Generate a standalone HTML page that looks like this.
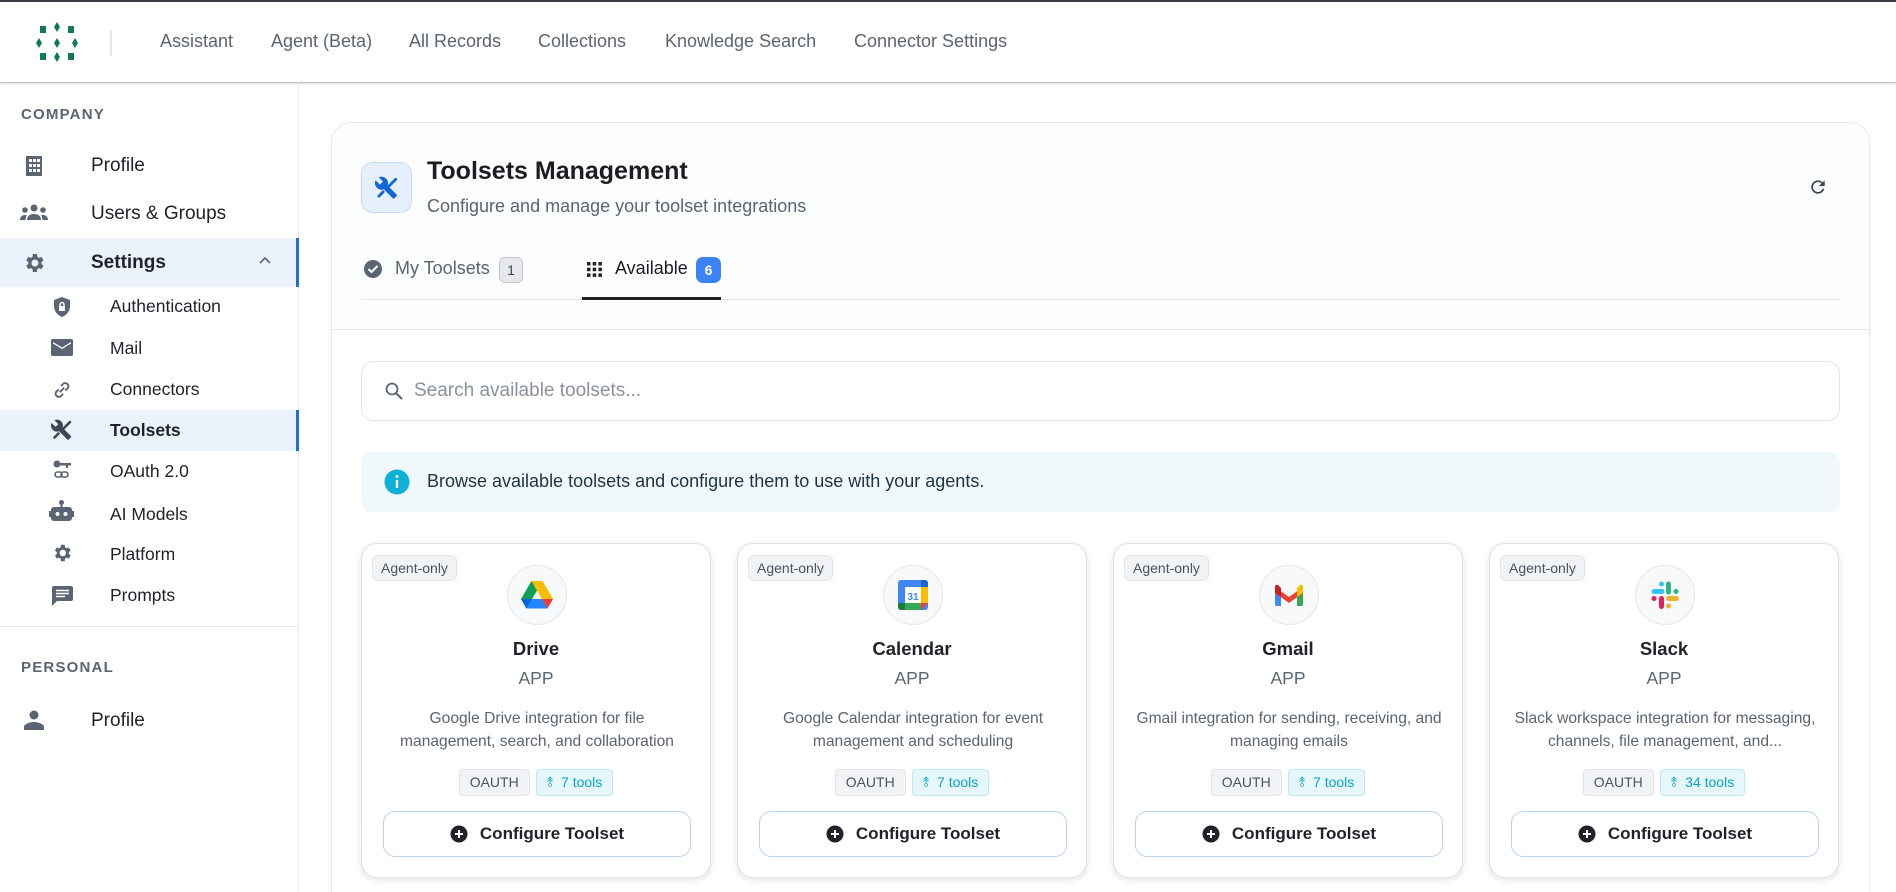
<!DOCTYPE html>
<html style="width:1896px;height:892px;overflow:hidden"><head><meta charset="utf-8"><style>
*{box-sizing:border-box;margin:0;padding:0}
body{width:1896px;height:892px;overflow:hidden;background:#fff;font-family:"Liberation Sans",Arial,sans-serif;color:#1f2328;position:relative}
.abs{position:absolute}
.top{left:0;top:0;width:1896px;height:82px;border-top:2px solid #3a3a44;background:#fff;box-shadow:0 1px 2px rgba(0,0,0,.35)}
.nav{top:29px;font-size:18px;color:#5b6472}
.side{left:0;top:82px;width:299px;height:810px;border-right:1px solid #e6e8eb}
.lbl{font-size:15px;letter-spacing:1.2px;color:#5b6472;font-weight:bold}
.it{font-size:19px;color:#1f2328}
.sub{font-size:17.5px;color:#1f2328}
.ic{fill:#5b6472}
.main{left:331px;top:122px;width:1539px;height:790px;border:1px solid #e6e8eb;border-radius:20px;background:#fff;overflow:hidden}
.card{width:350px;height:335px;top:543px;border:1px solid #dfe2e6;border-radius:16px;background:#fff;box-shadow:0 2px 8px rgba(0,0,0,.12)}
.card .badge{position:absolute;left:10px;top:11px;height:26px;padding:0 8px;line-height:24px;border:1px solid #e1e4e8;background:#f1f3f5;border-radius:6px;font-size:14px;color:#4b5563}
.card .logo{position:absolute;left:145px;top:21px;width:60px;height:60px;border-radius:50%;border:1px solid #e3e6ea;background:#f8f9fb;display:flex;align-items:center;justify-content:center}
.card .nm{position:absolute;left:0;width:100%;top:94px;text-align:center;font-weight:bold;font-size:18.5px}
.card .ty{position:absolute;left:0;width:100%;top:124px;text-align:center;font-size:17.5px;color:#5b6472}
.card .ds{position:absolute;left:20px;width:310px;top:163px;text-align:center;font-size:15.6px;line-height:23px;color:#5b6472}
.card .chips{position:absolute;left:0;width:100%;top:225px;display:flex;justify-content:center;gap:6px}
.chip{height:27px;line-height:25px;padding:0 10px;border-radius:4px;font-size:14px}
.c1{background:#f1f3f5;border:1px solid #e1e4e8;color:#4b5563}
.c2{background:#e6f7fb;border:1px solid #bfe8f3;color:#0aa5c7}
.card .btn{position:absolute;left:21px;top:267px;width:308px;height:46px;border:1px solid #b9d3f3;border-radius:12px;display:flex;align-items:center;justify-content:center;gap:12px;font-weight:bold;font-size:17px}
</style></head><body>
<div class="abs top">
<svg class="abs" style="left:34px;top:18px" width="48" height="46" viewBox="0 0 48 46"><g fill="#127a52"><rect x="6" y="6" width="6" height="7"/><rect x="34" y="6" width="6" height="7"/><rect x="6" y="33" width="6" height="7"/><rect x="34" y="33" width="6" height="7"/><path d="M23 2l3 5-3 5-3-5z"/><path d="M23 32l3 5-3 5-3-5z"/><path d="M5 18l3 5-3 5-3-5z"/><path d="M23 18l3 5-3 5-3-5z"/><path d="M41 18l3 5-3 5-3-5z"/></g></svg>
<div class="abs" style="left:110px;top:28px;width:2px;height:26px;background:#e4e6e9"></div>
<div class="abs nav" style="left:160px">Assistant</div>
<div class="abs nav" style="left:271px">Agent (Beta)</div>
<div class="abs nav" style="left:409px">All Records</div>
<div class="abs nav" style="left:538px">Collections</div>
<div class="abs nav" style="left:665px">Knowledge Search</div>
<div class="abs nav" style="left:854px">Connector Settings</div>
</div>
<div class="abs side">
<div class="abs lbl" style="left:21px;top:24px">COMPANY</div>
<svg class="abs" style="left:25px;top:73px" width="18" height="22"><path class="ic" d="M1 1h16v20H1z M4 4v3h3V4z M8 4v3h3V4z M12 4v3h3V4z M4 9v3h3V9z M8 9v3h3V9z M12 9v3h3V9z M4 14v3h3v-3z M8 14v3h3v-3z M12 14v3h3v-3z" fill-rule="evenodd"/></svg>
<div class="abs it" style="left:91px;top:73px">Profile</div>
<svg class="abs" style="left:20px;top:122px" width="28" height="18"><g class="ic"><circle cx="14" cy="4" r="3.5"/><circle cx="5" cy="6" r="2.8"/><circle cx="23" cy="6" r="2.8"/><path d="M7 16c0-4 3-6 7-6s7 2 7 6z"/><path d="M0 16c0-3 2-5 5-5 1 0 2 .3 2 .5-1 1-1.5 3-1.5 4.5z"/><path d="M28 16c0-3-2-5-5-5-1 0-2 .3-2 .5 1 1 1.5 3 1.5 4.5z"/></g></svg>
<div class="abs it" style="left:91px;top:121px">Users &amp; Groups</div>
<div class="abs" style="left:0;top:156px;width:299px;height:49px;background:#ebf2fb;border-right:3px solid #1e6fd9"></div>
<svg class="abs" style="left:22px;top:169px" width="24" height="24" viewBox="0 0 24 24"><path class="ic" d="M19.4 13a7.5 7.5 0 000-2l2.1-1.6-2-3.5-2.5 1a7 7 0 00-1.7-1L14.9 3h-4l-.4 2.9a7 7 0 00-1.7 1l-2.5-1-2 3.5L6.4 11a7.5 7.5 0 000 2l-2.1 1.6 2 3.5 2.5-1a7 7 0 001.7 1l.4 2.9h4l.4-2.9a7 7 0 001.7-1l2.5 1 2-3.5zM12.9 15.5a3.5 3.5 0 110-7 3.5 3.5 0 010 7z"/></svg>
<div class="abs it" style="left:91px;top:170px;font-weight:bold">Settings</div>
<svg class="abs" style="left:259px;top:174px" width="12" height="8"><path d="M1 7l5-5 5 5" stroke="#5b6472" stroke-width="1.6" fill="none"/></svg>
<svg class="abs" style="left:52px;top:214px" width="20" height="22" viewBox="0 0 20 22"><path class="ic" d="M10 1L2 4v6c0 5 3.5 9.5 8 11 4.5-1.5 8-6 8-11V4z"/><rect x="7" y="10" width="6" height="5" fill="#fff"/><path d="M8 10V8.5a2 2 0 014 0V10" stroke="#fff" stroke-width="1.4" fill="none"/></svg>
<div class="abs sub" style="left:110px;top:214px">Authentication</div>
<svg class="abs" style="left:51px;top:257px" width="22" height="17"><path class="ic" d="M2 0h18a2 2 0 012 2v13a2 2 0 01-2 2H2a2 2 0 01-2-2V2a2 2 0 012-2zm0 3v1.5l9 5.5 9-5.5V3l-9 5.5z"/></svg>
<div class="abs sub" style="left:110px;top:256px">Mail</div>
<svg class="abs" style="left:51px;top:297px" width="22" height="22" viewBox="0 0 20 20"><g stroke="#5b6472" stroke-width="1.7" fill="none"><path d="M8 12l4-4"/><path d="M7 9.5L4.5 12a3 3 0 004 4l2.5-2.5"/><path d="M13 10.5l2.5-2.5a3 3 0 00-4-4L9 6.5"/></g></svg>
<div class="abs sub" style="left:110px;top:297px">Connectors</div>
<div class="abs" style="left:0;top:328px;width:299px;height:41px;background:#ebf2fb;border-right:3px solid #1e6fd9"></div>
<svg class="abs" style="left:51px;top:337px" width="22" height="22" viewBox="0 0 24 24"><path fill="#3d4654" d="M21.7 18.6l-9.1-9.1c.9-2.3.4-5-1.5-6.9-2-2-5-2.4-7.4-1.3L8 5.6 5 8.6.6 4.4C-.6 6.8 0 9.8 1.9 11.8c1.9 1.9 4.6 2.4 6.9 1.5l9.1 9.1c.4.4 1 .4 1.4 0l2.3-2.3c.5-.4.5-1.1.1-1.5z"/><path fill="#3d4654" d="M17 2l5 0 0 2-9 9-2-2 9-9z M2 20l6-6 2 2-6 6z"/></svg>
<div class="abs sub" style="left:110px;top:338px;font-weight:bold">Toolsets</div>
<svg class="abs" style="left:52px;top:377px" width="20" height="22" viewBox="0 0 20 22"><g class="ic"><circle cx="5" cy="5" r="3.5"/><rect x="7" y="4" width="12" height="2.5"/><rect x="14" y="6" width="2" height="3"/></g><g stroke="#5b6472" stroke-width="1.6" fill="none"><rect x="3" y="13" width="7" height="5" rx="2.5"/><rect x="9" y="13" width="7" height="5" rx="2.5"/></g></svg>
<div class="abs sub" style="left:110px;top:379px">OAuth 2.0</div>
<svg class="abs" style="left:49px;top:418px" width="25" height="22" viewBox="0 0 25 22"><g class="ic"><circle cx="12.5" cy="2.5" r="2.5"/><rect x="11.5" y="3" width="2" height="4"/><path d="M5 7h15a3 3 0 013 3v1h2v6h-2v1a3 3 0 01-3 3H5a3 3 0 01-3-3v-1H0v-6h2v-1a3 3 0 013-3z"/></g><circle cx="8.5" cy="14" r="2" fill="#fff"/><circle cx="16.5" cy="14" r="2" fill="#fff"/></svg>
<div class="abs sub" style="left:110px;top:422px">AI Models</div>
<svg class="abs" style="left:51px;top:460px" width="22" height="22" viewBox="0 0 24 24"><path class="ic" d="M19.4 13a7.5 7.5 0 000-2l2.1-1.6-2-3.5-2.5 1a7 7 0 00-1.7-1L14.9 3h-4l-.4 2.9a7 7 0 00-1.7 1l-2.5-1-2 3.5L6.4 11a7.5 7.5 0 000 2l-2.1 1.6 2 3.5 2.5-1a7 7 0 001.7 1l.4 2.9h4l.4-2.9a7 7 0 001.7-1l2.5 1 2-3.5zM12.9 15.5a3.5 3.5 0 110-7 3.5 3.5 0 010 7z"/></svg>
<div class="abs sub" style="left:110px;top:462px">Platform</div>
<svg class="abs" style="left:52px;top:504px" width="21" height="20" viewBox="0 0 21 20"><path class="ic" d="M2 0h17a2 2 0 012 2v11a2 2 0 01-2 2H5l-5 5V2a2 2 0 012-2z"/><g stroke="#fff" stroke-width="1.6"><path d="M4 4.5h13M4 7.5h13M4 10.5h9"/></g></svg>
<div class="abs sub" style="left:110px;top:503px">Prompts</div>
<div class="abs" style="left:0;top:544px;width:299px;height:1px;background:#e6e8eb"></div>
<div class="abs lbl" style="left:21px;top:577px">PERSONAL</div>
<svg class="abs" style="left:24px;top:628px" width="20" height="20"><g class="ic"><circle cx="10" cy="5" r="4.5"/><path d="M0 20v-3c0-3 6-5 10-5s10 2 10 5v3z"/></g></svg>
<div class="abs it" style="left:91px;top:628px">Profile</div>
</div>

<div class="abs main">
<div class="abs" style="left:0;top:0;width:1539px;height:207px;background:#fcfdfd;border-bottom:1px solid #e6e8eb"></div>
<div class="abs" style="left:29px;top:39px;width:51px;height:51px;border:1px solid #c6daf6;background:#e6effc;border-radius:12px;display:flex;align-items:center;justify-content:center">
<svg width="24" height="24" viewBox="0 0 24 24"><path fill="#1565d8" d="M21.7 18.6l-9.1-9.1c.9-2.3.4-5-1.5-6.9-2-2-5-2.4-7.4-1.3L8 5.6 5 8.6.6 4.4C-.6 6.8 0 9.8 1.9 11.8c1.9 1.9 4.6 2.4 6.9 1.5l9.1 9.1c.4.4 1 .4 1.4 0l2.3-2.3c.5-.4.5-1.1.1-1.5z"/><path fill="#1565d8" d="M17 2l5 0 0 2-9 9-2-2 9-9z M2 20l6-6 2 2-6 6z"/></svg></div>
<div class="abs" style="left:95px;top:34px;font-size:25px;font-weight:bold;color:#1a1d21">Toolsets Management</div>
<div class="abs" style="left:95px;top:73px;font-size:18px;color:#5b6472">Configure and manage your toolset integrations</div>
<svg class="abs" style="left:1476px;top:54px" width="20" height="20" viewBox="0 0 24 24"><path fill="#3d4654" d="M17.6 6.4A8 8 0 1019.7 14h-2.1A6 6 0 1112 6c1.7 0 3.1.7 4.2 1.8L13 11h7V4z"/></svg>
<svg class="abs" style="left:31px;top:136px" width="20" height="20"><circle cx="10" cy="10" r="9" fill="#5b6472"/><path d="M5.5 10l3 3 6-6" stroke="#fff" stroke-width="2" fill="none"/></svg>
<div class="abs" style="left:63px;top:135px;font-size:18px;color:#5b6472">My Toolsets</div>
<div class="abs" style="left:167px;top:134px;width:24px;height:26px;border:1px solid #c4c8ce;background:#e6e8eb;border-radius:6px;font-size:14px;text-align:center;line-height:24px;color:#3d4654">1</div>
<svg class="abs" style="left:255px;top:139px" width="15" height="15"><g fill="#1f2328"><rect x="0" y="0" width="3.5" height="3.5"/><rect x="5.7" y="0" width="3.5" height="3.5"/><rect x="11.4" y="0" width="3.5" height="3.5"/><rect x="0" y="5.7" width="3.5" height="3.5"/><rect x="5.7" y="5.7" width="3.5" height="3.5"/><rect x="11.4" y="5.7" width="3.5" height="3.5"/><rect x="0" y="11.4" width="3.5" height="3.5"/><rect x="5.7" y="11.4" width="3.5" height="3.5"/><rect x="11.4" y="11.4" width="3.5" height="3.5"/></g></svg>
<div class="abs" style="left:283px;top:135px;font-size:18px;color:#1a1d21">Available</div>
<div class="abs" style="left:364px;top:134px;width:25px;height:26px;background:#3b82f6;border-radius:7px;font-size:14px;text-align:center;line-height:26px;color:#fff;font-weight:bold">6</div>
<div class="abs" style="left:29px;top:176px;width:1480px;height:1px;background:#e3e5e8"></div>
<div class="abs" style="left:250px;top:174px;width:139px;height:3px;background:#1f2328"></div>

<div class="abs" style="left:29px;top:238px;width:1479px;height:60px;border:1px solid #e3e5e8;border-radius:12px;background:#fff"></div>
<svg class="abs" style="left:52px;top:258px" width="20" height="20"><circle cx="8" cy="8" r="5.5" stroke="#5b6472" stroke-width="1.8" fill="none"/><path d="M12 12l6 6" stroke="#5b6472" stroke-width="2"/></svg>
<div class="abs" style="left:82px;top:257px;font-size:19px;color:#8a929c">Search available toolsets...</div>

<div class="abs" style="left:29px;top:329px;width:1479px;height:60px;border-radius:10px;background:#f1f8fb"></div>
<svg class="abs" style="left:52px;top:346px" width="26" height="26"><circle cx="13" cy="13" r="12.5" fill="#0bb1d6"/><rect x="11.8" y="11" width="2.4" height="8" fill="#fff"/><circle cx="13" cy="7.5" r="1.5" fill="#fff"/></svg>
<div class="abs" style="left:95px;top:348px;font-size:18px;color:#1f3340">Browse available toolsets and configure them to use with your agents.</div>
</div>

<div class="abs card" style="left:361px">
<div class="badge">Agent-only</div>
<div class="logo"><svg width="32" height="28" viewBox="0 0 32 28"><path d="M10.5 0h11l-5.5 9.5z" fill="#0f9d58"/><path d="M10.5 0L0 18l5.5 9.5L16 9.5z" fill="#0f9d58"/><path d="M21.5 0L32 18H21L10.5 0z" fill="#fbbc04"/><path d="M5.5 27.5L11 18h21l-5.5 9.5z" fill="#2684fc"/><path d="M0 18l5.5 9.5L11 18z" fill="#0066da"/><path d="M32 18l-5.5 9.5L21 18z" fill="#ea4335"/></svg></div>
<div class="nm">Drive</div><div class="ty">APP</div>
<div class="ds">Google Drive integration for file management, search, and collaboration</div>
<div class="chips"><div class="chip c1">OAUTH</div><div class="chip c2">⥉&nbsp; 7 tools</div></div>
<div class="btn"><svg width="18" height="18"><circle cx="9" cy="9" r="8.5" fill="#1f2328"/><path d="M9 5v8M5 9h8" stroke="#fff" stroke-width="2"/></svg>Configure Toolset</div>
</div>

<div class="abs card" style="left:737px">
<div class="badge">Agent-only</div>
<div class="logo"><svg width="30" height="30" viewBox="0 0 30 30"><rect x="0" y="0" width="30" height="30" rx="3" fill="#4285f4"/><rect x="23" y="7" width="7" height="16" fill="#fbbc04"/><rect x="7" y="23" width="16" height="7" fill="#34a853"/><path d="M0 23h7v7H3a3 3 0 01-3-3z" fill="#188038"/><path d="M23 23h7l-7 7z" fill="#ea4335"/><path d="M23 0h4a3 3 0 013 3v4h-7z" fill="#1967d2"/><rect x="7" y="7" width="16" height="16" fill="#fff"/><text x="15" y="20" font-size="10" font-weight="bold" text-anchor="middle" fill="#4285f4" font-family="Liberation Sans">31</text></svg></div>
<div class="nm">Calendar</div><div class="ty">APP</div>
<div class="ds">Google Calendar integration for event management and scheduling</div>
<div class="chips"><div class="chip c1">OAUTH</div><div class="chip c2">⥉&nbsp; 7 tools</div></div>
<div class="btn"><svg width="18" height="18"><circle cx="9" cy="9" r="8.5" fill="#1f2328"/><path d="M9 5v8M5 9h8" stroke="#fff" stroke-width="2"/></svg>Configure Toolset</div>
</div>

<div class="abs card" style="left:1113px">
<div class="badge">Agent-only</div>
<div class="logo"><svg width="28" height="22" viewBox="0 0 28 22"><path d="M0 3v17a2 2 0 002 2h4V9z" fill="#4285f4"/><path d="M28 3v17a2 2 0 01-2 2h-4V9z" fill="#34a853"/><path d="M0 3l14 10L28 3v6L14 19 0 9z" fill="#ea4335"/><path d="M22 4l3-3a2 2 0 013 2v6l-6 4z" fill="#fbbc04"/><path d="M6 4L3 1a2 2 0 00-3 2v6l6 4z" fill="#c5221f"/></svg></div>
<div class="nm">Gmail</div><div class="ty">APP</div>
<div class="ds">Gmail integration for sending, receiving, and managing emails</div>
<div class="chips"><div class="chip c1">OAUTH</div><div class="chip c2">⥉&nbsp; 7 tools</div></div>
<div class="btn"><svg width="18" height="18"><circle cx="9" cy="9" r="8.5" fill="#1f2328"/><path d="M9 5v8M5 9h8" stroke="#fff" stroke-width="2"/></svg>Configure Toolset</div>
</div>

<div class="abs card" style="left:1489px">
<div class="badge">Agent-only</div>
<div class="logo"><svg width="28" height="28" viewBox="0 0 28 28"><g stroke-linecap="round" stroke-width="5"><path d="M3 10.5h8" stroke="#36c5f0"/><path d="M10.5 3v0" stroke="#36c5f0"/><path d="M17.5 3v8" stroke="#2eb67d"/><path d="M25 10.5h0" stroke="#2eb67d"/><path d="M17.5 17.5h8" stroke="#ecb22e"/><path d="M17.5 25h0" stroke="#ecb22e"/><path d="M10.5 17.5v8" stroke="#e01e5a"/><path d="M3 17.5h0" stroke="#e01e5a"/></g></svg></div>
<div class="nm">Slack</div><div class="ty">APP</div>
<div class="ds">Slack workspace integration for messaging, channels, file management, and...</div>
<div class="chips"><div class="chip c1">OAUTH</div><div class="chip c2">⥉&nbsp; 34 tools</div></div>
<div class="btn"><svg width="18" height="18"><circle cx="9" cy="9" r="8.5" fill="#1f2328"/><path d="M9 5v8M5 9h8" stroke="#fff" stroke-width="2"/></svg>Configure Toolset</div>
</div>
</body></html>
